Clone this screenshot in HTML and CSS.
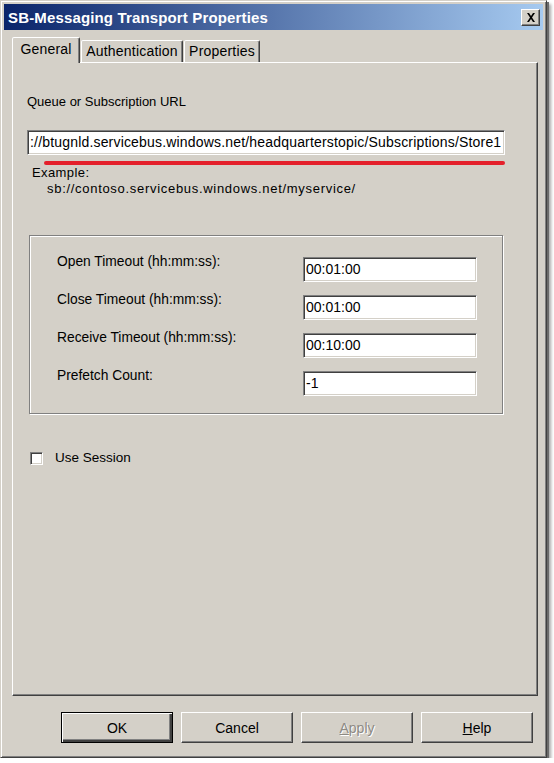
FILE: index.html
```html
<!DOCTYPE html>
<html>
<head>
<meta charset="utf-8">
<link rel="stylesheet" href="styles.css">
</head>
<body>
<div class="window">
  <div class="titlebar">
    <span class="title">SB-Messaging Transport Properties</span>
    <span class="close"><svg width="10" height="9" viewBox="0 0 10 9"><path d="M1 0h2l2 3 2-3h2L6 4.5 9 9H7L5 6 3 9H1l3-4.5z" fill="#000"/></svg></span>
  </div>
  <div class="tabs">
    <div class="tab tab-general selected">General</div>
    <div class="tab tab-auth">Authentication</div>
    <div class="tab tab-props">Properties</div>
  </div>
  <div class="panel">
    <div class="label url-label">Queue or Subscription URL</div>
    <div class="textbox url-box">://btugnld.servicebus.windows.net/headquarterstopic/Subscriptions/Store1</div>
    <div class="redline"></div>
    <div class="label example">Example:</div>
    <div class="label example-url">sb://contoso.servicebus.windows.net/myservice/</div>
    <div class="group">
      <div class="label row-label">Open Timeout (hh:mm:ss):</div>
      <div class="textbox field">00:01:00</div>
      <div class="label row-label">Close Timeout (hh:mm:ss):</div>
      <div class="textbox field">00:01:00</div>
      <div class="label row-label">Receive Timeout (hh:mm:ss):</div>
      <div class="textbox field">00:10:00</div>
      <div class="label row-label">Prefetch Count:</div>
      <div class="textbox field">-1</div>
    </div>
    <div class="check-row">
      <span class="checkbox"></span>
      <span class="label">Use Session</span>
    </div>
  </div>
  <div class="buttons">
    <div class="btn default">OK</div>
    <div class="btn">Cancel</div>
    <div class="btn disabled"><u>A</u>pply</div>
    <div class="btn"><u>H</u>elp</div>
  </div>
</div>
</body>
</html>
```

FILE: styles.css
```css
html, body {
  margin: 0;
  padding: 0;
  background: #ffffff;
}
body {
  font-family: "Liberation Sans", Arial, sans-serif;
  font-size: 13px;
  color: #000;
}
.window {
  width: 547px;
  height: 758px;
  box-sizing: border-box;
  background: #d4d0c8;
  border: 1px solid;
  border-color: #d4d0c8 #404040 #404040 #d4d0c8;
  box-shadow: inset 1px 1px #ffffff, inset -1px -1px #808080, 2px 2px 0 #6a6a6a, 4px 4px 3px rgba(0,0,0,0.35);
  padding: 3px;
  display: flex;
  flex-direction: column;
}
.titlebar {
  height: 26px;
  background: linear-gradient(to right, #0a246a, #a6caf0);
  display: flex;
  align-items: center;
  justify-content: space-between;
  padding: 0 3px 0 4px;
  flex: none;
}
.title {
  color: #fff;
  font-weight: bold;
  font-size: 15px;
  letter-spacing: 0.15px;
}
.close {
  width: 19px;
  height: 17px;
  box-sizing: border-box;
  background: #d4d0c8;
  border: 1px solid;
  border-color: #ffffff #404040 #404040 #ffffff;
  box-shadow: inset -1px -1px #808080;
  display: flex;
  align-items: center;
  justify-content: center;
}
.tabs {
  display: flex;
  align-items: flex-end;
  height: 25px;
  margin: 7px 0 0 8px;
  position: relative;
  z-index: 1;
  flex: none;
  font-size: 14px;
  letter-spacing: 0.2px;
}
.tab {
  height: 22px;
  box-sizing: border-box;
  border: 1px solid;
  border-bottom: none;
  border-color: #ffffff #404040 transparent #ffffff;
  border-radius: 2px 2px 0 0;
  box-shadow: inset -1px 0 #808080;
  display: flex;
  align-items: center;
  justify-content: center;
  background: #d4d0c8;
  padding-bottom: 1px;
}
.tab-general { width: 68px; }
.tab-auth { width: 102px; margin-left: 1px; }
.tab-props { width: 76px; margin-left: 1px; }
.tab.selected {
  height: 26px;
  margin-bottom: -1px;
  padding-bottom: 4px;
}
.panel {
  width: 526px;
  height: 634px;
  box-sizing: border-box;
  margin-left: 8px;
  border: 1px solid;
  border-color: #ffffff #404040 #404040 #ffffff;
  box-shadow: inset -1px -1px #808080;
  padding: 31px 0 0 14px;
  flex: none;
}
.label {
  line-height: 16px;
  white-space: nowrap;
}
.textbox {
  background: #fff;
  box-sizing: border-box;
  height: 25px;
  border: 1px solid;
  border-color: #808080 #ffffff #ffffff #808080;
  box-shadow: inset 1px 1px #404040, inset -1px -1px #d4d0c8;
  padding: 0 0 0 2px;
  line-height: 23px;
  white-space: nowrap;
  overflow: hidden;
  font-size: 14px;
}
.url-box {
  width: 478px;
  margin-top: 20px;
  letter-spacing: 0.18px;
}
.redline {
  width: 461px;
  height: 4px;
  background: #e4202b;
  border-radius: 2px;
  margin: 6px 0 0 17px;
}
.example {
  margin-left: 5px;
  letter-spacing: 0.4px;
}
.example-url {
  margin-left: 20px;
  letter-spacing: 0.7px;
}
.group {
  width: 474px;
  height: 179px;
  box-sizing: border-box;
  margin: 38px 0 0 2px;
  border: 1px solid #808080;
  box-shadow: inset 1px 1px #ffffff, 1px 1px #ffffff;
  display: grid;
  grid-template-columns: 246px 174px;
  grid-auto-rows: 25px;
  row-gap: 13px;
  padding: 21px 0 0 27px;
}
.row-label {
  margin-top: -3px;
  font-size: 13.8px;
}
.field {
  width: 174px;
}
.check-row {
  display: flex;
  align-items: center;
  gap: 12px;
  margin: 36px 0 0 3px;
  font-size: 13.5px;
}
.checkbox {
  width: 13px;
  height: 13px;
  box-sizing: border-box;
  background: #fff;
  border: 1px solid;
  border-color: #808080 #ffffff #ffffff #808080;
  box-shadow: inset 1px 1px #404040, inset -1px -1px #d4d0c8;
}
.buttons {
  display: flex;
  justify-content: flex-end;
  gap: 8px;
  margin: 16px 10px 0 0;
}
.btn {
  width: 112px;
  height: 31px;
  box-sizing: border-box;
  border: 1px solid;
  border-color: #ffffff #404040 #404040 #ffffff;
  box-shadow: inset -1px -1px #808080;
  display: flex;
  align-items: center;
  justify-content: center;
  font-size: 14px;
}
.btn.default {
  border: 1px solid #000;
  box-shadow: inset 1px 1px #ffffff, inset -2px -2px #404040, inset -3px -3px #808080;
}
.btn.disabled {
  color: #8d8a84;
  text-shadow: 1px 1px #ffffff;
}
```
